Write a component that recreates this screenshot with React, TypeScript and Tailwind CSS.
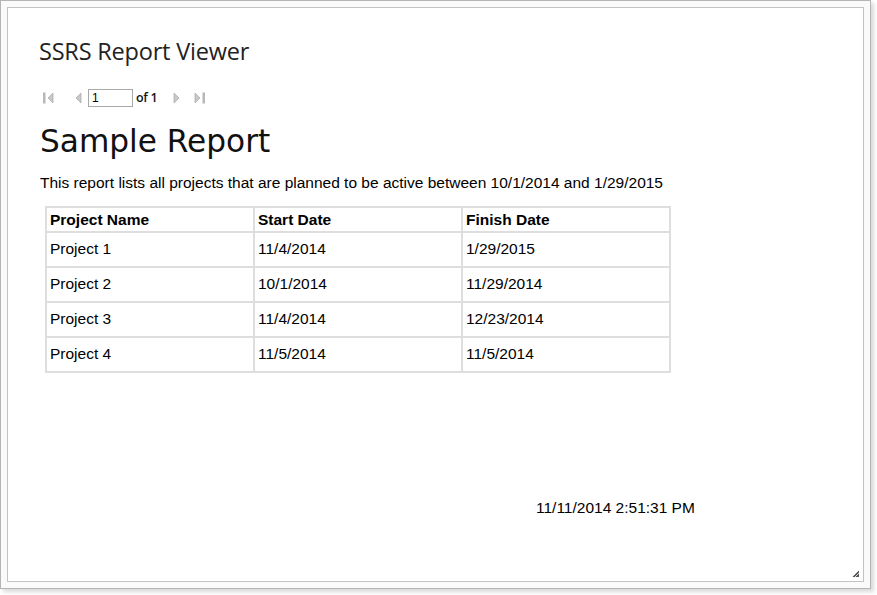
const rows = [
  ['Project 1', '11/4/2014', '1/29/2015'],
  ['Project 2', '10/1/2014', '11/29/2014'],
  ['Project 3', '11/4/2014', '12/23/2014'],
  ['Project 4', '11/5/2014', '11/5/2014'],
];

function NavIcon({ dir, bar }: { dir: 'left' | 'right'; bar?: boolean }) {
  // small grey triangle with optional end bar, like the SSRS toolbar
  return (
    <svg width="14" height="14" viewBox="0 0 14 14">
      {dir === 'left' ? (
        <>
          {bar && <rect x="1" y="1.5" width="2.5" height="11" fill="#b8b8b8" />}
          <path d={bar ? 'M11 2 L6 7 L11 12 Z' : 'M10 2 L5 7 L10 12 Z'} fill="#c8c8c8" stroke="#a8a8a8" strokeWidth="0.7" />
        </>
      ) : (
        <>
          <path d={bar ? 'M3 2 L8 7 L3 12 Z' : 'M4 2 L9 7 L4 12 Z'} fill="#c8c8c8" stroke="#a8a8a8" strokeWidth="0.7" />
          {bar && <rect x="10.5" y="1.5" width="2.5" height="11" fill="#b8b8b8" />}
        </>
      )}
    </svg>
  );
}

export default function App() {
  return (
    <div className="w-[877px] h-[595px] bg-white relative overflow-hidden">
      <div className="w-[871px] h-[589px] border border-[#b4b4b4] bg-[#fafafa] p-[6px] shadow-[3px_3px_4px_rgba(0,0,0,0.15)]">
        <div className="w-full h-full border border-[#c3c3c3] bg-white relative">
          <div className="pl-[31px] pt-[28px]">
            <h1 className="text-[23.5px] leading-[30px] text-[#222] font-['Open_Sans',sans-serif] tracking-[-0.2px]">SSRS Report Viewer</h1>
            <div className="flex items-center mt-[22px] h-[20px] font-['Liberation_Sans',sans-serif]">
              <div className="ml-[3px]"><NavIcon dir="left" bar /></div>
              <div className="ml-[15px]"><NavIcon dir="left" /></div>
              <input
                readOnly
                value="1"
                className="ml-[3px] w-[45px] h-[18px] border border-[#a9a9a9] text-[12px] pl-[3px] text-black outline-none"
              />
              <span className="ml-[3px] text-[12.5px] text-[#111] font-['Open_Sans',sans-serif] font-semibold tracking-[-0.3px]">of 1</span>
              <div className="ml-[13px]"><NavIcon dir="right" /></div>
              <div className="ml-[8px]"><NavIcon dir="right" bar /></div>
            </div>
            <h2 className="mt-[14px] text-[31.2px] leading-[38px] text-[#111] font-['DejaVu_Sans',sans-serif] ml-[1px]">Sample Report</h2>
            <p className="mt-[13px] text-[15.5px] leading-[20px] text-black font-['Liberation_Sans',sans-serif] ml-[1px]">
              This report lists all projects that are planned to be active between 10/1/2014 and 1/29/2015
            </p>
            <table className="mt-[13px] ml-[6px] border-collapse font-['Liberation_Sans',sans-serif] text-[15.5px] text-black">
              <thead>
                <tr className="h-[25px]">
                  {['Project Name', 'Start Date', 'Finish Date'].map((h) => (
                    <th key={h} className="w-[208px] border-2 border-[#dedede] text-left font-bold pl-[3px] pt-[1px] leading-[18px] align-middle">{h}</th>
                  ))}
                </tr>
              </thead>
              <tbody>
                {rows.map((r) => (
                  <tr key={r[0]} className="h-[35px]">
                    {r.map((c, i) => (
                      <td key={i} className="border-2 border-[#dedede] pl-[3px] pb-[2px] leading-[18px] align-middle">{c}</td>
                    ))}
                  </tr>
                ))}
              </tbody>
            </table>
          </div>
          <div className="absolute left-[528px] top-[488px] text-[15.5px] text-black font-['Liberation_Sans',sans-serif]">
            11/11/2014 2:51:31 PM
          </div>
          <svg className="absolute right-[3px] bottom-[3px]" width="10" height="10" viewBox="0 0 10 10">
            <path d="M9 2 L9 9 L2 9 Z" fill="#555" />
            <path d="M9 2 L2 9" stroke="#fff" strokeWidth="0.8" />
            <path d="M9 5 L5 9" stroke="#fff" strokeWidth="0.8" />
          </svg>
        </div>
      </div>
    </div>
  );
}
